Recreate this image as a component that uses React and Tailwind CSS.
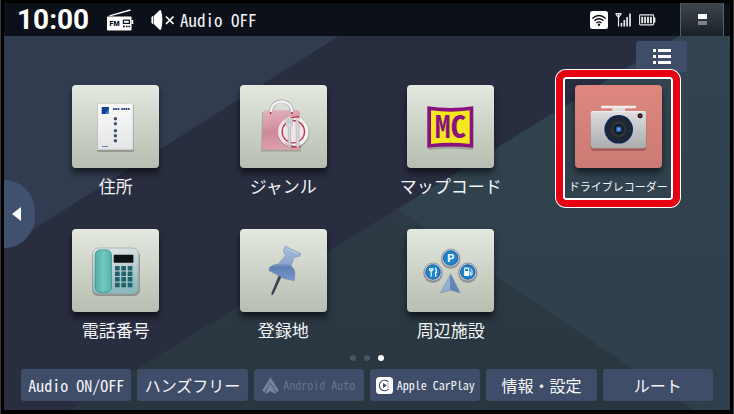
import React from "react";

const jp = "font-['Noto_Sans_CJK_JP',sans-serif]";
const half = "[font-feature-settings:'hwid']";

function AddressIcon() {
  return (
    <svg viewBox="0 0 87 83" className="size-full" aria-hidden="true">
      <defs>
        <linearGradient id="paper" x1="0" y1="0" x2="0" y2="1">
          <stop offset="0" stopColor="#fafafa" />
          <stop offset="1" stopColor="#e4e5e6" />
        </linearGradient>
      </defs>
      <rect x="25" y="19.5" width="37" height="47.5" rx="1" fill="#000" opacity="0.22" />
      <rect x="25.7" y="18.7" width="35.3" height="46" fill="url(#paper)" stroke="#c9cbcc" strokeWidth="0.6" />
      <rect x="29.7" y="22" width="7.3" height="7" fill="#12418f" />
      <path d="M33 29 L37 24 V29 Z" fill="#3a86cf" />
      {[41, 43.3, 45.6, 49.2, 51.4, 53.6, 55.8].map((x) => (
        <rect key={x} x={x} y="23" width="1.8" height="2" fill="#3b4a80" />
      ))}
      {[33.7, 38.7, 45.7, 50.7, 55.7].map((y) => (
        <circle key={y} cx="43.4" cy={y} r="1.7" fill="#41526f" />
      ))}
      <rect x="30" y="61" width="6" height="0.9" fill="#5b76b4" />
    </svg>
  );
}

function GenreIcon() {
  return (
    <svg viewBox="0 0 87 83" className="size-full" aria-hidden="true">
      <defs>
        <linearGradient id="bag" x1="0.2" y1="0" x2="0.4" y2="1">
          <stop offset="0" stopColor="#e3b3bd" />
          <stop offset="0.55" stopColor="#cf8999" />
          <stop offset="1" stopColor="#dca3ae" />
        </linearGradient>
      </defs>
      <path d="M22 27 H60 L61 66.5 H21 Z" fill="#000" opacity="0.18" />
      <path d="M23.5 25.3 H59.3 L60 64.7 H21.7 Z" fill="url(#bag)" />
      <path d="M31 27.5 C31 12.5 52 12.5 52 27.5" fill="none" stroke="#9d9fa3" strokeWidth="3.6" />
      <path d="M31 27.5 C31 12.8 52 12.8 52 27.5" fill="none" stroke="#f3f3f3" strokeWidth="2.4" />
      <circle cx="30.7" cy="28" r="0.9" fill="#a51b3a" />
      <circle cx="52" cy="28" r="0.9" fill="#a51b3a" />
      <circle cx="53.6" cy="47.5" r="15.8" fill="#000" opacity="0.2" />
      <circle cx="53.3" cy="46.7" r="15.2" fill="#f6f4f4" />
      <path d="M59 32.5 A15 15 0 1 0 59 61 L60 64 H60 V32 Z" fill="#e9cbd1" />
      <path d="M59 32 A15 15 0 1 0 60 61.5" fill="none" stroke="#b92640" strokeWidth="1.3" />
      <circle cx="53.3" cy="46.7" r="13.5" fill="#f4eff0" />
      <circle cx="53.3" cy="46.7" r="11.2" fill="#f0e7e9" stroke="#c03048" strokeWidth="1.3" />
      <path d="M46 33 V38.5 Q46 41.5 48.2 41.8 V60 Q48.2 62.3 49.4 62.3 Q50.6 62.3 50.6 60 V41.8 Q52.6 41.5 52.6 38.5 V33 M48.2 33 V39 M50.4 33 V39" fill="#d6d7db" stroke="#adb0b8" strokeWidth="0.7" />
      <path d="M56 34.5 Q59.2 35 59.2 41 V60.5 Q59.2 62.6 57.8 62.6 Q56.4 62.6 56.4 60.5 Z" fill="#d6d7db" stroke="#adb0b8" strokeWidth="0.6" />
    </svg>
  );
}

function MapCodeIcon() {
  return (
    <svg viewBox="0 0 87 83" className="size-full" aria-hidden="true">
      <path d="M21 24 H66 V65 Q43.5 62 21 65 Z" fill="#000" opacity="0.18" />
      <path d="M20.3 21.3 Q43.5 24.5 66.3 21.3 V62.8 Q43.5 60 20.3 62.8 Z" fill="#8a127f" />
      <path d="M24 25.3 Q43.5 28 62.7 25.3 V59 Q43.5 56.4 24 59 Z" fill="#f4e61f" />
      <text x="43.5" y="53" textAnchor="middle" fontSize="31" fontWeight="700" fill="#8a127f" className={`${jp} ${half}`}>
        MC
      </text>
    </svg>
  );
}

function CameraIcon() {
  return (
    <svg viewBox="0 0 87 83" className="size-full" aria-hidden="true">
      <defs>
        <linearGradient id="body" x1="0" y1="0" x2="0" y2="1">
          <stop offset="0" stopColor="#dddedf" />
          <stop offset="1" stopColor="#a9abad" />
        </linearGradient>
      </defs>
      <rect x="15.5" y="28.5" width="56" height="37.5" rx="4" fill="#5a2320" opacity="0.35" />
      <rect x="26" y="20.8" width="35" height="2.4" rx="0.8" fill="#f0f0f0" />
      <rect x="37.3" y="22.8" width="12.8" height="3.4" fill="#dcdcdc" />
      <rect x="15.7" y="25.9" width="55.4" height="37.4" rx="3" fill="url(#body)" />
      <rect x="16.4" y="26.3" width="54" height="1" rx="0.5" fill="#f4f4f4" />
      <circle cx="43.7" cy="44.3" r="14.3" fill="#12284f" />
      <circle cx="43.7" cy="44.3" r="11.8" fill="#20272e" />
      <circle cx="43.7" cy="44.3" r="8" fill="#2b333c" />
      <circle cx="43.7" cy="44.3" r="5.2" fill="#111a29" />
      <rect x="41" y="41.6" width="5.4" height="5.4" rx="1.6" fill="#2a66c0" />
      <circle cx="43.7" cy="44.3" r="1" fill="#9cc6f4" />
      <circle cx="65.1" cy="30.7" r="2.5" fill="#1d1516" />
      <circle cx="65.1" cy="30.7" r="1.2" fill="#a3202b" />
    </svg>
  );
}

function PhoneIcon() {
  const cols = [43, 49.3, 55.7];
  const rows = [37, 42.5, 48, 53.7];
  return (
    <svg viewBox="0 0 87 83" className="size-full" aria-hidden="true">
      <defs>
        <linearGradient id="phone" x1="0" y1="0" x2="0.3" y2="1">
          <stop offset="0" stopColor="#e6e8e9" />
          <stop offset="0.5" stopColor="#c3d2d5" />
          <stop offset="1" stopColor="#8db9bd" />
        </linearGradient>
        <linearGradient id="handset" x1="0" y1="0" x2="1" y2="0">
          <stop offset="0" stopColor="#4fb0a8" />
          <stop offset="0.5" stopColor="#74c8bf" />
          <stop offset="1" stopColor="#55b3ab" />
        </linearGradient>
      </defs>
      <rect x="20" y="21" width="48" height="46" rx="6" fill="#000" opacity="0.25" />
      <rect x="20.7" y="19" width="46" height="46" rx="6" fill="url(#phone)" stroke="#8f9ea2" strokeWidth="0.6" />
      <rect x="23.2" y="20.9" width="16.2" height="42.4" rx="5" fill="url(#handset)" stroke="#348f8b" strokeWidth="0.8" />
      <rect x="41.7" y="25.7" width="19.7" height="8" rx="0.8" fill="#0d1315" />
      {rows.map((y) => cols.map((x) => <rect key={`${x}-${y}`} x={x} y={y} width="4.7" height="4.6" rx="0.6" fill="#1f626b" />))}
    </svg>
  );
}

function PinIcon() {
  return (
    <svg viewBox="0 0 87 83" className="size-full" aria-hidden="true">
      <defs>
        <linearGradient id="pin" x1="0" y1="0" x2="0" y2="1">
          <stop offset="0" stopColor="#a9c0e0" />
          <stop offset="0.5" stopColor="#8ba6cf" />
          <stop offset="0.6" stopColor="#5f80b5" />
          <stop offset="1" stopColor="#7898cc" />
        </linearGradient>
      </defs>
      <path d="M42.5 45.5 L39.6 44.3 L31.4 64 L31.6 66.6 L33.6 65 Z" fill="#3b4656" />
      <path
        d="M45 17.2 L60.3 24.3 Q60.8 27.3 59 27.6 L54.2 28 L51 36.8 Q55.2 40.5 55 45 L54.2 51.8 L44 49.5 L29 41.5 Q29 38 31 37.4 Q34 35.2 38.5 35 L45.5 26.4 L43.5 22 Z"
        fill="url(#pin)"
        stroke="#6b7f9f"
        strokeWidth="0.5"
      />
      <path d="M45 18 L59.5 24.6 Q52 24.8 45 18 Z" fill="#b5c8e4" />
    </svg>
  );
}

function FacilityIcon() {
  return (
    <svg viewBox="0 0 87 83" className="size-full" aria-hidden="true">
      <defs>
        <linearGradient id="arrow" x1="0" y1="0" x2="1" y2="0">
          <stop offset="0.5" stopColor="#8fb0d4" />
          <stop offset="0.5" stopColor="#6287b3" />
        </linearGradient>
      </defs>
      {[
        [43.7, 29],
        [26, 43],
        [60.8, 43],
      ].map(([x, y]) => (
        <g key={x}>
          <circle cx={x} cy={y + 1.4} r="9.6" fill="#000" opacity="0.25" />
          <circle cx={x} cy={y} r="9" fill="#c6cfdc" stroke="#7886a0" strokeWidth="0.8" />
          <circle cx={x} cy={y} r="7.2" fill="#1b86cc" stroke="#1f4f86" strokeWidth="0.9" />
        </g>
      ))}
      <text x="43.8" y="33" textAnchor="middle" fontSize="11" fontWeight="700" fill="#fff" className="font-['Roboto',sans-serif]">
        P
      </text>
      <path d="M22.6 39 V41.2 Q24.2 43 25.8 41.2 V39 M24.2 39 V47.8" fill="none" stroke="#fff" strokeWidth="1.1" />
      <path d="M28 38.8 Q29.4 39.2 29.3 43.3 H28.6 V47.8" fill="none" stroke="#fff" strokeWidth="1.3" />
      <path d="M57.2 38.6 H62.2 V47 H57.2 Z" fill="#fff" />
      <rect x="58.2" y="39.8" width="3" height="2.2" fill="#1b86cc" />
      <path d="M62.2 43 H63.6 V46 H65 V41.2 L63.4 39.6" fill="none" stroke="#fff" strokeWidth="0.9" />
      <path d="M43.7 45 L53.2 64 L43.7 61.2 L33.4 64 Z" fill="url(#arrow)" stroke="#7187a3" strokeWidth="0.5" />
    </svg>
  );
}

const tiles = [
  { label: "住所", Icon: AddressIcon },
  { label: "ジャンル", Icon: GenreIcon },
  { label: "マップコード", Icon: MapCodeIcon },
  { label: "ドライブレコーダー", Icon: CameraIcon, active: true },
  { label: "電話番号", Icon: PhoneIcon },
  { label: "登録地", Icon: PinIcon },
  { label: "周辺施設", Icon: FacilityIcon },
];

function Tile({ label, Icon, active }) {
  return (
    <button type="button" className="relative flex flex-col items-center gap-[6px]">
      <span
        className={`h-[83px] w-[87px] rounded-[4px] bg-linear-to-b shadow-[0_5px_6px_rgba(0,0,0,0.55)] ${
          active ? "from-[#de877f] to-[#cb7b75]" : "from-[#e4e8df] to-[#b8beb1]"
        }`}
      >
        <Icon />
      </span>
      <span className={`whitespace-nowrap leading-[24px] ${active ? "text-[11px]" : "text-[17px]"}`}>{label}</span>
      {active && (
        <span className="absolute -top-[15px] -bottom-[9px] left-1/2 w-[124px] -translate-x-1/2 rounded-[10px] border-[7px] border-[#e60012] shadow-[0_0_0_1px_#fff,inset_0_0_0_2px_#fff]" />
      )}
    </button>
  );
}

function RadioIcon() {
  return (
    <svg width="27" height="22" viewBox="0 0 27 22" role="img" aria-label="FM">
      <path d="M2.5 6.8 L23.5 1" stroke="#fff" strokeWidth="1.3" />
      <rect x="0" y="7.5" width="24.5" height="14" rx="0.8" fill="#fff" />
      <rect x="24.5" y="11" width="1.8" height="4" fill="#fff" />
      <text x="2.6" y="17.2" fontSize="7" fontWeight="900" fill="#0c1018" className="font-['Roboto',sans-serif]">
        FM
      </text>
      <rect x="16.4" y="11.2" width="6" height="3.2" fill="none" stroke="#0c1018" strokeWidth="1.2" />
      <path d="M16 17.5 H18 M19 17.5 H20.6 M21.4 17.5 H23" stroke="#0c1018" strokeWidth="1.4" />
    </svg>
  );
}

function MuteIcon() {
  return (
    <svg width="24" height="20" viewBox="0 0 24 20" aria-hidden="true">
      <path d="M0.4 7.5 Q1 6 2.4 5.8 V14.2 Q1 14 0.4 12.5 Z" fill="#fff" />
      <path d="M3 5.8 L8.6 0.3 H10 Q11.4 5 11.4 10 Q11.4 15 10 19.7 H8.6 L3 14.2 Z" fill="#fff" />
      <path d="M15 6.5 L22.5 14 M22.5 6.5 L15 14" stroke="#fff" strokeWidth="1.7" />
    </svg>
  );
}

function WifiIcon() {
  return (
    <svg width="18" height="18" viewBox="0 0 18 18" aria-hidden="true">
      <rect width="18" height="18" rx="2.5" fill="#fff" />
      <g fill="none" stroke="#0c1018" strokeWidth="1.3">
        <path d="M2.3 7.4 Q9 1.6 15.7 7.4" />
        <path d="M4.4 9.7 Q9 5.8 13.6 9.7" />
        <path d="M6.4 12 Q9 9.8 11.6 12" />
      </g>
      <circle cx="9" cy="13.8" r="1.2" fill="#0c1018" />
    </svg>
  );
}

function SignalIcon() {
  return (
    <svg width="17" height="14" viewBox="0 0 17 14" aria-hidden="true">
      <path d="M0.5 0.6 H6.5 M0.8 0.8 L3.5 4.5 L6.2 0.8 M3.5 0.5 V13.5" fill="none" stroke="#e8e8e8" strokeWidth="1.2" />
      <path d="M6.5 13.5 V10 M9.3 13.5 V7 M12.1 13.5 V4 M15 13.5 V0.5" stroke="#e8e8e8" strokeWidth="1.7" />
    </svg>
  );
}

function BatteryIcon() {
  return (
    <svg width="17" height="12" viewBox="0 0 17 12" aria-hidden="true">
      <rect x="0.6" y="0.9" width="14" height="10" rx="0.8" fill="none" stroke="#e8e8e8" strokeWidth="1.1" />
      <rect x="15" y="3.5" width="1.4" height="5" fill="#e8e8e8" />
      <path d="M3.2 2.8 V9.2 M6.1 2.8 V9.2 M9 2.8 V9.2 M11.9 2.8 V9.2" stroke="#e8e8e8" strokeWidth="1.9" />
    </svg>
  );
}

function AndroidAutoIcon() {
  return (
    <svg width="17" height="17" viewBox="0 0 17 17" className="shrink-0" aria-hidden="true">
      <path d="M8.5 0.3 L16.8 13.6 L14.6 15.4 L8.5 5.6 L2.4 15.4 L0.2 13.6 Z" fill="#78829a" />
      <path d="M8.5 6.6 L14 16 L12.6 16.8 L8.5 14 L4.4 16.8 L3 16 Z" fill="#78829a" />
    </svg>
  );
}

function CarPlayIcon() {
  return (
    <svg width="17" height="17" viewBox="0 0 17 17" className="shrink-0" aria-hidden="true">
      <rect width="17" height="17" rx="3.5" fill="#fff" />
      <path d="M12.6 5 A5.3 5.3 0 1 0 12.6 12" fill="none" stroke="#3f4d68" strokeWidth="1.1" />
      <path d="M11.2 5.8 A3.8 3.8 0 0 1 11.2 11.2" fill="none" stroke="#8b94a5" strokeWidth="0.8" />
      <path d="M7 6 L11 8.5 L7 11 Z" fill="#3f4d68" />
    </svg>
  );
}

const menu = [
  { label: "Audio ON/OFF" },
  { label: "ハンズフリー" },
  { label: "Android Auto", Icon: AndroidAutoIcon, disabled: true },
  { label: "Apple CarPlay", Icon: CarPlayIcon },
  { label: "情報・設定" },
  { label: "ルート" },
];

export default function App() {
  return (
    <div className={`flex min-h-screen flex-col border-x border-[#3a3a3a] bg-black px-[3px] pt-[3px] pb-1 text-[#f4f5f7] ${jp}`}>
      <header className="flex h-[33px] items-center bg-[#0c1018] pr-[6px] pl-[13px]">
        <time className="w-[90px] font-['Roboto',sans-serif] text-[28px] leading-[32px] font-bold text-white">10:00</time>
        <RadioIcon />
        <div className="ml-[17px] flex items-center gap-[5px]">
          <MuteIcon />
          <span className={`text-[17px] leading-[32px] whitespace-nowrap ${half}`}>Audio OFF</span>
        </div>
        <div className="ml-auto flex items-center gap-[7px] pr-6">
          <WifiIcon />
          <SignalIcon />
          <BatteryIcon />
        </div>
        <button
          type="button"
          aria-label="画面切替"
          className="flex h-full w-[44px] flex-col items-center justify-center gap-[2px] border-x border-[#59616a] bg-linear-to-b from-[#3f474f] to-[#1a2027]"
        >
          <span className="h-[5px] w-[9px] bg-white" />
          <span className="h-[4px] w-[9px] bg-[#7d8186]" />
        </button>
      </header>

      <main className="relative isolate flex flex-1 flex-col overflow-hidden">
        <svg viewBox="4 36 726 374" preserveAspectRatio="none" className="absolute inset-0 -z-10 size-full" aria-hidden="true">
          <defs>
            <linearGradient id="teal" x1="0" y1="0" x2="0" y2="1">
              <stop offset="0" stopColor="#324450" />
              <stop offset="1" stopColor="#2e3f4b" />
            </linearGradient>
            <linearGradient id="low" x1="0" y1="0" x2="0" y2="1">
              <stop offset="0" stopColor="#2d3944" />
              <stop offset="1" stopColor="#29363f" />
            </linearGradient>
          </defs>
          <rect x="4" y="36" width="726" height="374" fill="#282d40" />
          <path d="M4 36 H339 L4 248 Z" fill="#323c50" />
          <path d="M679 36 H730 V410 H693 L397 209 Z" fill="url(#teal)" />
          <path d="M397 209 L693 410 H70 Z" fill="url(#low)" />
        </svg>

        <div className="flex justify-end pt-[5px] pr-[43px]">
          <button type="button" aria-label="リスト" className="flex h-[31px] w-[51px] items-center justify-center rounded-[3px] bg-[#404d68]">
            <svg width="18" height="15" viewBox="0 0 18 15" aria-hidden="true">
              <path d="M0 1.5 H3 M5 1.5 H18 M0 7.5 H3 M5 7.5 H18 M0 13.5 H3 M5 13.5 H18" stroke="#fff" strokeWidth="3" />
            </svg>
          </button>
        </div>

        <div className="mt-[13px] grid grid-cols-4 justify-items-center gap-y-[31px] px-7">
          {tiles.map((tile) => (
            <Tile key={tile.label} {...tile} />
          ))}
        </div>

        <div className="mt-[13px] flex justify-center gap-2">
          <span className="size-[6px] rounded-full bg-[#4c5460]" />
          <span className="size-[6px] rounded-full bg-[#4c5460]" />
          <span className="size-[6px] rounded-full bg-white" />
        </div>

        <nav className="mt-auto grid grid-cols-6 gap-[6px] px-[17px] pb-[9px]">
          {menu.map(({ label, Icon, disabled }) => (
            <button
              key={label}
              type="button"
              disabled={disabled}
              className={`flex h-[32px] items-center justify-center gap-1 rounded-[3px] bg-[#3f4d68] whitespace-nowrap ${half} ${
                Icon ? "text-[12px]" : "text-[16px]"
              } ${disabled ? "text-[#66718a]" : ""}`}
            >
              {Icon && <Icon />}
              {label}
            </button>
          ))}
        </nav>

        <button
          type="button"
          aria-label="前のページ"
          className="absolute top-[144px] left-0 flex h-[68px] w-[31px] items-center rounded-r-[34px] bg-[#40506f] pl-2"
        >
          <svg width="9" height="14" viewBox="0 0 9 14" aria-hidden="true">
            <path d="M9 0 V14 L0 7 Z" fill="#fff" />
          </svg>
        </button>
      </main>
    </div>
  );
}
